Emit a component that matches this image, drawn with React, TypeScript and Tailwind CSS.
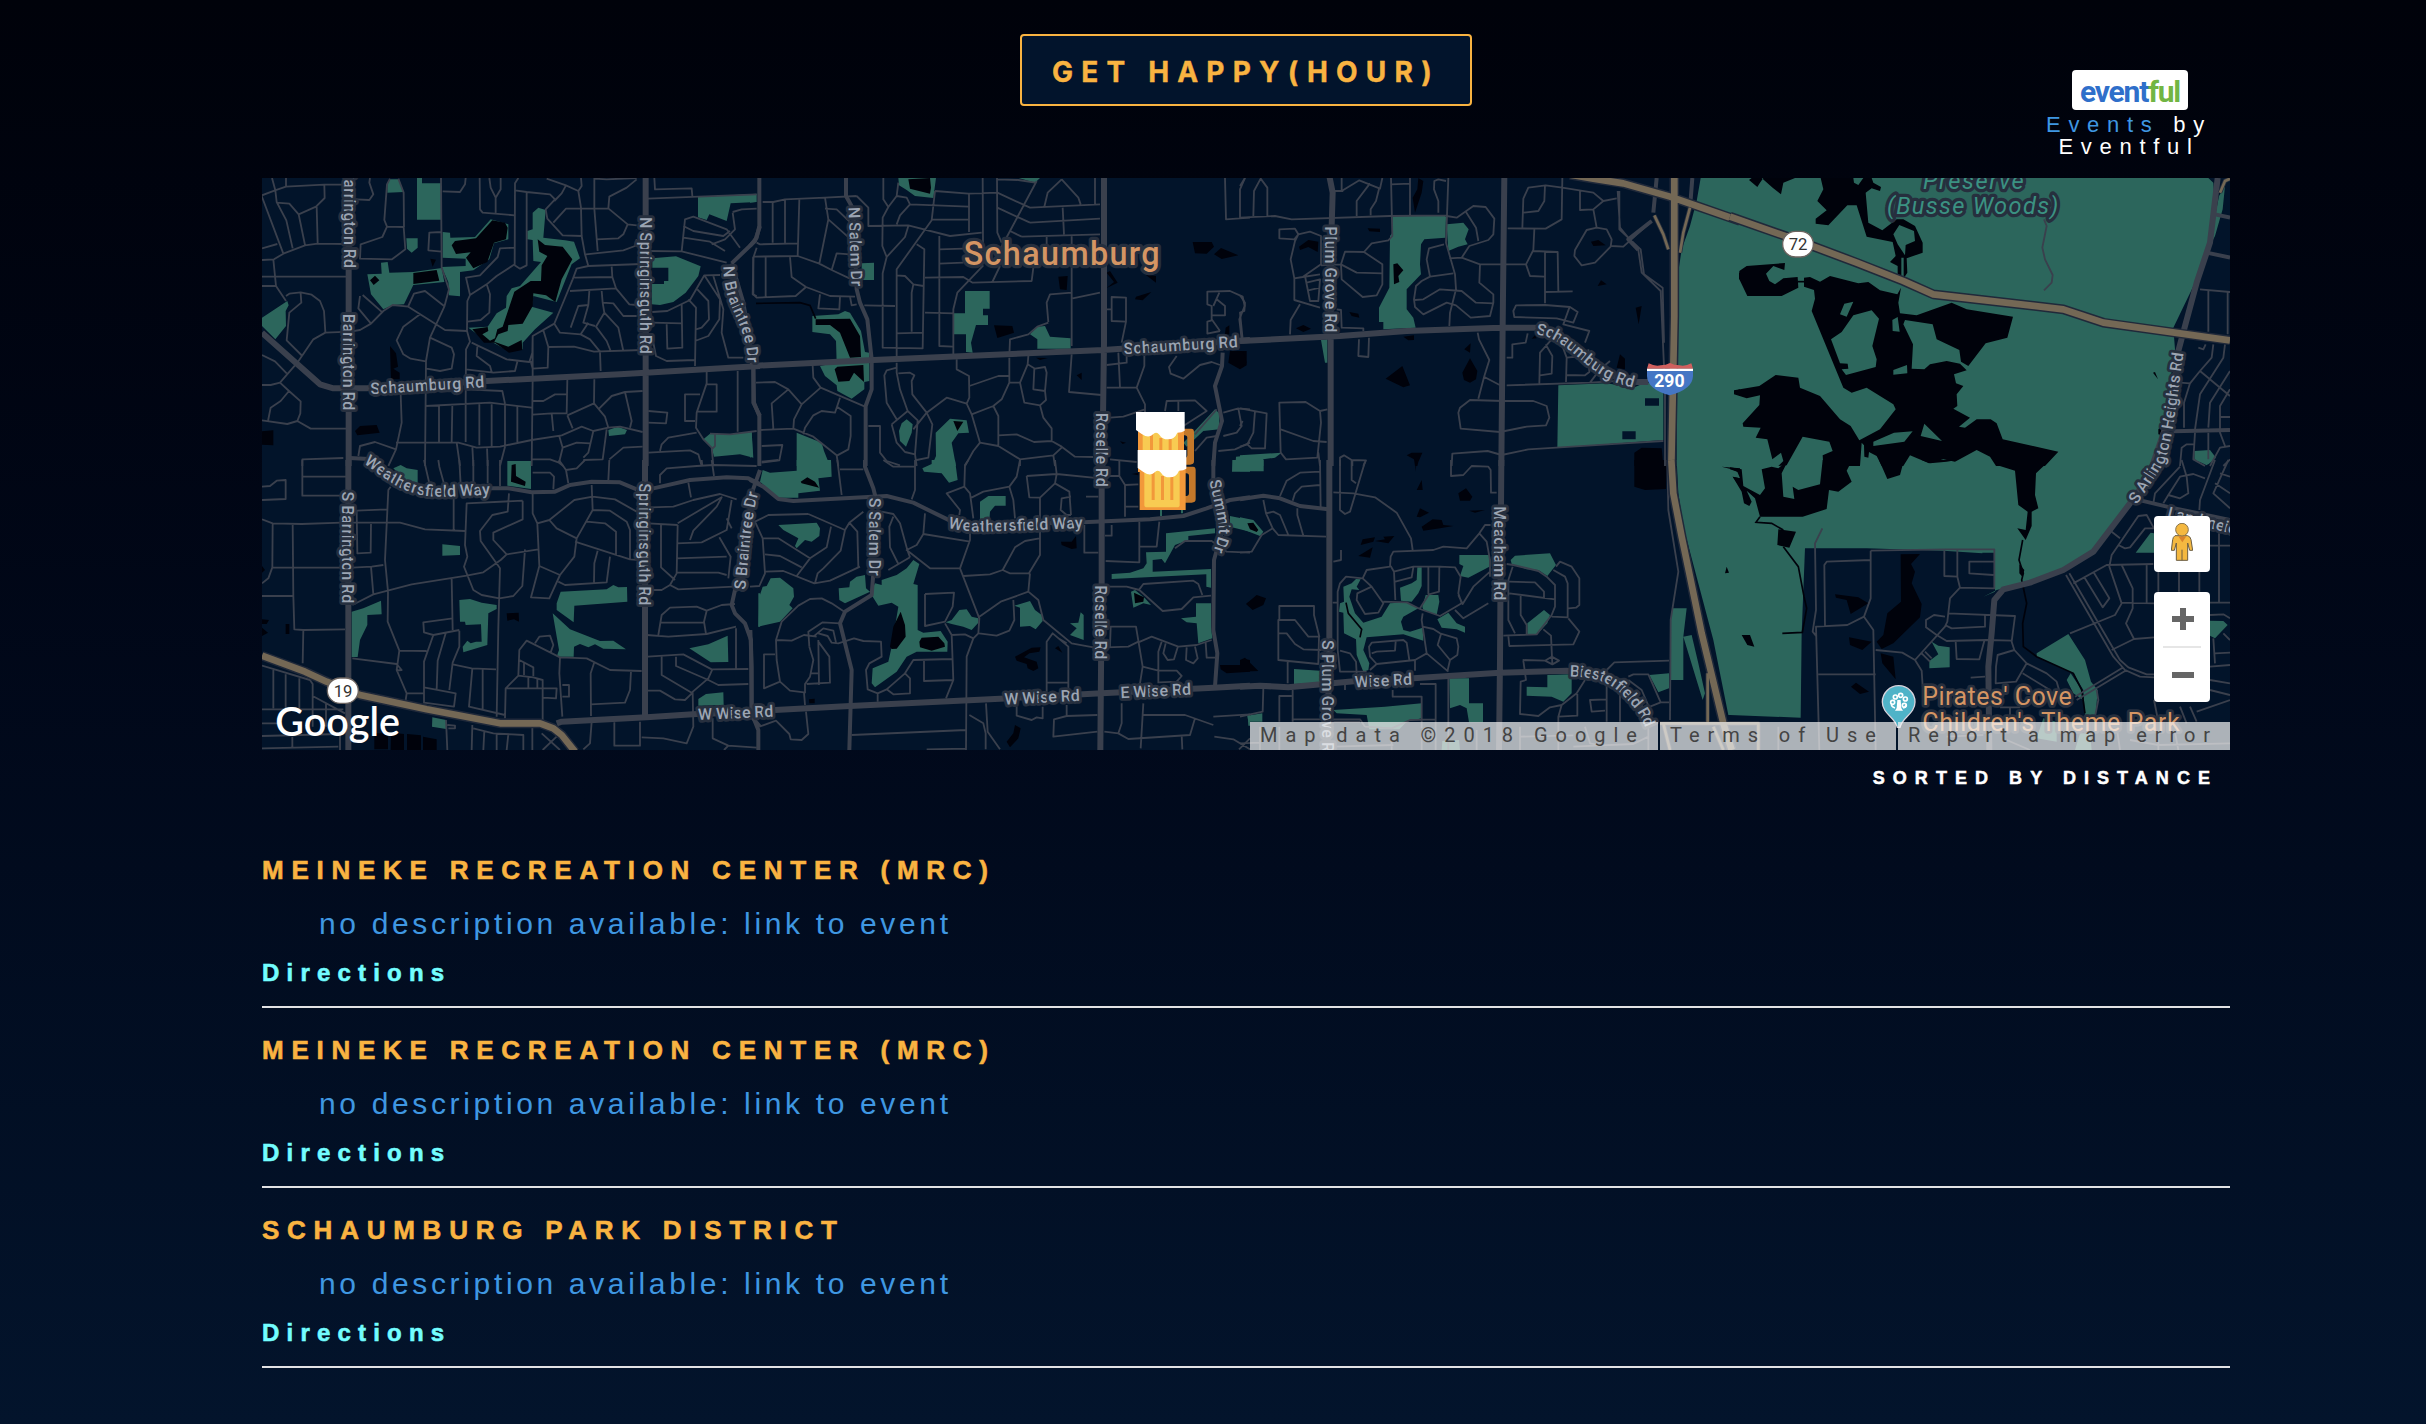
import React from 'react';

type Tile = {
  ox: number;
  oy: number;
  parks: string;
  water: string;
  streams?: string;
  roads: string;
  mid: string;
  main: string;
  highway?: string;
  ramp?: string;
};

const NAVY = '#02142a';
const PARK = '#2c665c';
const WATER = '#00020b';
const ROAD = '#3a404d';
const HALO = '#262f3e';
const TAN = '#746855';

const tiles: Tile[] = [
  {
    ox: 0,
    oy: 0,
    parks:
      'M6 425 82 375 86 388 77 405 78 450 46 490 6 450Z M382 25 390 10 417 10 431 48 382 50Z M471 6H486V22H543V131H471Z M439 187H473V215L455 230 441 218Z M322 295 365 293 363 260 383 258 388 290 460 288 545 276 553 318 460 327 432 385 398 387 370 400 333 355Z M548 168 570 170 571 185 645 183 692 130 745 145 745 190 702 202 688 250 640 283 600 288 600 361 567 358 565 318 545 273 617 270 617 248 548 245Z M835 95 857 102 850 185 915 193 942 197 960 247 935 265 890 378 820 360 815 392 880 410 825 460 788 500 788 520 745 525 700 500 680 495 625 455 683 452 710 412 738 395 740 360 755 337 780 330 843 258 820 255 818 192 802 190 802 165 818 160 818 110Z M1177 247 1248 241 1322 271 1315 300 1277 350 1240 378 1200 387 1175 385V324H1212V315H1225V275H1177Z M1314 63 1490 53 1490 78 1412 82 1400 135 1348 115 1340 132 1314 124Z M1045 762 1073 752 1101 762 1095 775 1047 780Z M1330 790 1350 773 1410 775 1475 767 1480 845 1440 835 1362 842 1355 815Z',
    water:
      'M575 208 585 195 648 187 697 133 735 140 743 155 738 190 702 200 682 258 640 277 618 245 632 229 588 234Z M833 190 855 207 908 212 937 250 905 310 886 378 858 358 820 352 818 390 788 443 745 447 743 465 715 475 703 497 745 512 785 492 787 522 747 530 705 500 672 500 637 460 683 453 685 465 667 475 690 494 705 487 712 460 728 452 763 347 812 315 843 315 845 268 862 240 838 227Z M511 248 528 251 518 272Z M460 291 530 282 538 314 460 324Z M330 313 345 299 358 313 341 327Z M390 510 408 532 414 572 400 578 419 590V610H393Z M285 765 300 750 350 747 359 770 292 778Z M6 766 40 763V808L6 806Z',
    roads:
      'M6 58 45 43 78 32 192 26 258 26 M78 32V6 M36 6 46 43 50 78 79 133 98 217 M50 80 88 83 116 115 135 207 M116 115 168 92 194 66 193 27 M170 92 173 203 M5 60 70 233 M6 217 52 204 M6 252 42 250 70 233 135 208 173 203 258 204 M40 250 48 330 78 375 M6 302 258 302 M6 330H48 M78 360 88 353 122 349 155 356 180 375 192 405 196 468 M122 352 124 380 88 410 80 493 127 540 M60 620 112 560 160 490 196 470 270 467 M6 537 45 556 80 592 M6 627 32 627 60 620 87 645 122 676 121 712 112 735 82 744 6 733 M24 735 32 695 62 675 87 645 M112 735 152 758 258 758 M330 6 328 20 340 55 328 72 290 70 M390 8 381 25 373 132 381 152 431 153 436 220 396 250 300 248 302 205 367 183 381 152 M415 8 431 50 432 153 M543 6 545 275 567 340 553 392 510 485 498 555 495 870 M548 46 600 48 615 25 617 6 M543 168 508 170 505 223 545 227 M659 6 660 100 668 110 764 118 M688 6 692 35 707 65 707 110 M722 6V40L707 65 M775 6 765 22 764 265 710 300 680 325 690 355 688 410 662 432 622 437 M765 43 800 48 870 55 885 70 857 100 862 128 908 178 965 180 M800 48V268L780 278 764 268 M763 215 720 217 713 243 660 298 618 305 630 357 622 375 621 465 630 497 618 520 617 680 M630 357 680 325 M860 8 918 28 955 45 963 95 965 180 975 235 985 270 950 278 938 310 905 390 883 443 818 480 817 530 808 558 740 550 635 500 M918 28 905 52 883 75 M963 6 965 30 955 45 M1003 6 1003 98 1013 225 M1130 10 1100 35 1048 62 1045 97 918 98 880 140 M1003 8 1040 10 1130 6 M1045 97 1103 145 1090 175 1075 187 1010 190 M1103 145 1130 148 M1130 190 1125 210 1090 223 978 235 M985 270 1145 264 M943 305 1057 303 1055 272 M930 345 1068 337 M1057 303 1068 337 1108 385 1130 387 M988 345 985 387 955 390 932 455 M985 387 970 440 1005 450 M883 443 900 470 962 475 985 440 M1025 345 1028 380 1060 382 1090 420 1130 420 M1028 380 1033 410 1008 452 1040 495 1052 525 M1033 410 1075 455 1090 525 M962 475 990 490 1020 527 M865 513 942 512 1002 527 1145 522 M850 463 865 513 863 575 818 578 812 555 M1020 527 1022 585 M480 415 430 452 410 493 430 535 452 548 497 556 M300 360 295 397 333 443 370 405 398 387 445 392 528 445 555 462 622 465 M308 357 368 410 M445 390 462 353 495 345 555 392 M333 443 300 462 270 467 M510 485 575 515 582 535 575 578 540 585 500 578 M652 512 650 540 690 570 695 588 M617 580 700 590 765 585 772 557 M617 640 727 645 735 683 M497 690 690 680 815 695 M537 690V798 M577 688 575 798 M617 680V798 M658 682V808 M695 685V812 M735 683V812 M772 690V798 M408 800 595 800 650 815 720 812 815 792 905 778 965 752 1000 765 1045 755 1080 752 1148 768 M590 800 600 870 M637 812 640 870 M681 812 683 870 M735 812 720 870 M818 480V610L815 870 M422 655 425 740 408 820 385 870 M408 820 345 798 300 810 295 840 M127 870V850L250 846 M922 610 920 712 875 712 818 716 M818 675 850 675 885 655 922 655 M875 712 880 765 M922 718 938 757 M922 718 1002 682 1003 610 M1002 682 1035 722 1045 755 M1018 697 1055 660 1095 648 1148 645 M1095 648 1115 735 1110 755 M897 778 908 815 897 860 910 870 M908 815 950 800 990 802 M1000 765 985 830 970 845 M1040 760 1028 850 970 852 M1148 812 1090 815 1048 850 M818 850 870 850 897 860 M1163 68 1490 55 M1183 6 1185 40 1295 37 1297 60 M1162 225 1265 226 1400 260 M1265 226 1275 130 1300 122 1400 160 1440 215 M1270 150 1300 165 1390 180 1410 165 M1270 185 1350 197 1395 225 M1418 110 1425 160 1395 190 1355 205 M1418 108 1445 100 1490 98 M1177 408 1222 405 1290 372 1333 298 1380 297 M1177 440 1265 442 M1265 385 1267 515 1222 518 1220 445 M1285 370 1308 395 1305 570 M1312 340 1345 375 1347 430 1325 455 1308 460 M1333 298 1380 370 1378 430 1345 480 1305 495 M1180 500 1188 540 1220 555 1305 552 M1360 300 1390 400 1385 470 1405 545 1450 545 M1490 215 1480 245 1478 355 1490 360 M1165 705 1222 710 1218 742 1165 740 M1320 655H1275V735H1305 M1340 585 1340 622 1310 710 1308 755 1330 790 1355 815 1360 870 M1340 625H1370V707H1310 M1433 585V767 M1165 830 1290 823 1315 835 1325 870 M1200 825 1205 805 1225 785 1310 770 M1490 765 1410 775 1350 773 M1365 775V810L1355 820',
    mid: 'M1500 150 1485 195 1415 262 M1415 262 1450 380 1480 570V680L1500 720 M270 846 340 850',
    main: 'M266 0V870 M6 470 180 625 220 637 320 637 680 615 1080 595 1500 570 M1157 6V870',
  },
  {
    ox: 0,
    oy: 852,
    parks:
      'M400 25 422 15 440 25 473 30V78L445 80 425 50Z M742 3H813V87L742 77Z M547 253 600 258V285L547 287Z M275 455 310 445 363 422 365 463 322 465V495L300 540 293 591H275Z M598 420 630 417 665 428 710 435V447L685 460 682 555 610 577 608 560 622 542 632 550 648 545 665 545 663 493 617 495 615 485 600 485Z M890 430 902 395 1040 388 1060 375 1075 382 1101 381 1102 425 943 437 941 487 890 450Z M878 460 930 508 1020 543 1060 542 1098 568 1030 566 1005 553 985 562 960 552 942 560 941 590 890 590 897 570Z M1288 565 1345 553 1403 527 1405 606 1352 607Z M1315 717 1338 702 1390 697 1391 735 1315 737Z M517 772 558 780V807L516 800Z M1495 400h5v100h-5z',
    water:
      'M755 15 767 12 768 48 797 65 795 78 753 65Z M740 460 776 458 777 485 762 478 742 482Z M343 820H384V868H343Z M393 818 432 822V870H392Z M441 822 483 826V870H441Z M489 830 530 838V870H489Z M77 492H88V522H77Z M6 478 27 480 20 492 6 492Z M6 503 24 518 6 528Z M6 318 15 330 6 338Z',
    roads:
      'M127 0V107L258 107 M127 50H258 M6 80 30 78 50 62 77 60V117L6 120 M6 178 38 190 125 192 245 188 420 188 495 208 615 213 M38 190 37 322 25 355 6 370 M98 192 100 408 103 508 130 510 255 508 M37 322 245 323 M6 408H100 M130 510 128 610 M392 80 385 90 375 300 384 395 383 485 418 572 410 630 440 700 437 720 M380 148 290 152 292 280 332 278 333 192 M277 323 335 320 370 315 M333 320 340 403 M277 435 340 403 455 373 620 347 670 337 722 300 740 283 835 268 M581 117V210 M788 122 620 130 615 255 622 290 612 320 640 390 665 405 718 415 760 408 787 378 795 268 M788 122V178L700 218V240L740 283 M747 100 743 155 697 165 660 213 662 243 720 325 715 500 710 770 M818 100 818 160 832 190 838 318 813 412 868 415 900 345 943 290 950 235 998 150 995 75 M838 318 900 345 M832 190 868 180 943 120 998 110 1065 118 1130 155 M868 180 890 205 950 235 M998 150 1050 152 1100 185 1110 210 1110 298 M980 185 1035 190 1068 215V285 M945 245 1110 298 1140 300 M1013 272 1003 310 1002 367 M1050 290 1040 367 915 375 895 365 M575 357 578 510 M578 475 490 487 492 517 520 525 598 510 M520 525 492 605 492 728 582 740 587 700 492 682 M557 520 533 602 530 688 M598 512V560L578 608 568 690 M578 613 635 625 708 628 M637 625 627 740 735 765 M668 628V752 M418 572 500 573 M277 595 410 612 425 630 408 632 M440 700 492 700 M735 775 737 685 775 647 778 570 800 542 900 592 980 595 1050 630 1145 633 M825 550 838 530 870 527 880 555 872 577 M900 592 898 640 907 770 M778 600 820 622V648 M792 610V645 M775 647 820 652 848 660 848 780 M737 685 890 685 888 715 850 713 M805 652V683 M832 656V683 M907 675H927V710H907 M1003 607 992 640 993 768 M1113 633 1110 690 1095 728 993 733 M1160 525 1225 530 1340 522 1428 500 M1195 525 1205 465 1230 443 1310 440 1340 452 1385 435 1425 432 M1200 488 1330 488 M1340 452 1332 485 1338 522 M1165 190 1253 195 M1175 142 1240 140 1300 120 1380 102 1430 118 M1253 195 1250 340 1230 375 1205 390 1165 390 M1203 195V322L1245 360 M1253 190 1320 150 1385 112 1370 140 1300 212 1290 240 M1250 250 1325 247 1400 210 1415 120 M1250 295 1400 290 M1250 338 1375 338 1400 345 M1378 232 1412 290 1405 355 M1230 375 1255 388 1420 380 M1400 175 1415 205 M1285 68 1293 112 M1200 70 1200 45 1220 25 1310 18 1360 15 1490 18 M1325 0 1327 18 M1355 0 1362 48 M818 38 870 38 882 50 880 88 M897 0 918 30 925 70 M918 30 950 25 975 0 M1048 0 1045 60 M1163 590 1270 583 1355 628 1465 627 M1205 590V645L1295 698 1345 655 1357 628 M1248 590V618L1345 660 1375 675 1465 672 M1428 505V625 M1163 692 1200 692 1245 718 1275 720 1298 698 1300 800 1280 850 1210 835 1145 832 M492 0 508 70 M535 0 538 20 553 75 M598 0 602 75 M640 0V70 M683 0V70 M720 0V78 M1063 787V857H1140V785 M1358 775V835L1405 857 1490 863 M1405 857 1392 870 M6 617 150 660 158 672V800 M40 630V745 M77 643V748 M118 655V750 M6 748 250 748 M158 708 255 760 M198 730V800 M6 828 240 822V870 M6 865 235 860 M97 825V865 M6 790H60 M637 795 635 870 M640 805 700 820 790 825V870 M673 812 670 870 M710 818V870 M745 822 740 870 M817 780V870 M845 820 900 870 M900 820 848 870 M558 780 562 870 M562 795 585 797V805H565 M995 785 990 850 970 868',
    mid: 'M690 85 745 85 815 97 885 95 930 75 995 65 1080 67 1130 88 M1180 85 1290 60 1400 52 1465 55 1500 72 M1500 30 1475 100 1440 385 1425 390 1415 435 1425 460 1455 490 1473 540 1475 770 1500 800',
    main: 'M265 0V880 M890 790 905 785 1160 772 1310 762 1500 756 M1155 0V770',
    highway: 'M6 587 135 635 200 665 300 705 500 748 720 790 840 790 880 805 905 825 945 875',
  },
  {
    ox: 1470,
    oy: 0,
    parks:
      'M0 57 18 54V78L0 80Z M445 6H558L550 66 495 60 470 42 447 28Z M806 6 870 6 855 20Z M335 262 372 260V312H335Z M187 420 265 415 285 405 300 410 333 465 345 528 358 530V615L343 618V640L305 668 262 645 260 628 225 600 210 570 260 560 258 495 240 475 187 468Z M645 345H719V398H699V418H714V447H678L663 500 668 530 648 528V475H612V412H645Z M840 475 862 452 885 450 900 482 962 487V518L862 518V490Z M447 765 455 742 470 730 488 745 485 770 468 812 450 795Z M545 870 558 840 557 770 600 728 650 733 657 770 625 772 605 800 618 870Z M140 770 215 800 222 825 240 870H140Z M0 770 5 768 8 840 0 845Z M1300 800 1325 775 1395 700 1408 712 1408 760 1360 765 1310 812Z M1458 842 1500 838V870H1456Z',
    water:
      'M475 10 540 6 543 35 540 53 480 38Z M197 430 300 428 330 480 333 543 300 545 270 470 240 447 197 447Z M254 580 262 572 340 567 342 618 312 590 298 615 265 617Z M610 735 640 737 622 765Z M1328 198 1385 198 1392 212 1370 233 1335 232Z M1392 235 1413 216 1465 238 1415 249Z M1187 296 1218 300V320Z M1155 370 1158 362 1204 348 1178 373Z M925 302 953 300 950 342 930 340Z M1070 290 1080 285 1103 320 1070 336 1092 318Z M732 448 787 450 792 470 742 486Z M980 598 995 590V612Z M858 545 893 546 870 552Z M1427 455 1438 448V475H1425Z M1440 525 1490 525 1490 568 1470 580 1435 560Z M1110 796 1128 800 1118 804Z',
    streams: 'M18 382 150 380 180 388 197 428',
    roads:
      'M38 78 70 78 105 70 225 65 320 60 M68 78V200 M105 72V200 M148 70 143 240 M20 200 30 205 143 202 M10 242 143 240 208 263 245 282 300 308 M225 65 235 130 208 263 M225 98 260 100 300 138 M235 130 300 188 M300 235 260 232 245 282 M120 243 125 303 168 333 M10 242 10 355 20 365 137 360 168 333 240 360 315 362 M47 243V362 M210 355 205 397 268 400 270 363 M300 362 305 388 320 385 M320 60 355 95V150L475 148 600 180 695 170 M343 388 435 390 M400 6V70L415 93 398 125 397 210 410 243 398 292V515L518 517 523 220 500 205 M445 20 440 60 415 93 M440 60 470 65 480 85 655 92 M480 85 450 118 440 145 M475 150 465 183 410 243 M440 545V280L545 133 555 45 M545 131H657 M657 55V168 M555 45 655 53 742 50 840 95 1050 85 M698 6 699 200 M741 6 742 170 755 200 M742 95 840 140 M742 10 805 12 855 20 M860 15 780 165 815 182 M815 182 1050 175 M840 140 1050 128 M938 95 942 175 M780 165 740 240 M935 10 893 50 883 92 M935 10 985 65 992 85 M1035 6V85 M568 180V510L608 512 M568 220 640 218 M568 263 640 260 M525 305 640 303 668 320 845 315 850 275 M750 270 727 318 M525 410 612 412 M438 298 465 300 490 325 520 330 M490 325 485 350V467 M438 472 520 470 M610 535V400L622 350 700 268 M895 438 890 380 900 355 965 350 M965 180V510 M890 182V215 M968 367 1050 350 M778 540 780 490 835 475 862 452 895 440 M1070 400H1085 M1085 363 1128 365 1128 437 1085 435Z M1128 437 1115 500 M1410 465 1372 473V437L1385 433V390L1372 385V347L1440 345 1478 362 1484 390 1468 430 1475 490 M1385 430 1410 465 M1408 350 1390 390 M1400 370 1425 390V418H1385 M1425 6 1428 130 1500 125 M1485 6 1470 40V125 M1105 530 1110 635 M1070 567 1130 560V535 M1070 635 1160 635 1185 685V710 M1160 635 1183 570 1183 540 M1280 540 1257 573 1262 593 1300 608 1350 567 1385 558 1410 567 M965 535 957 648 1055 657 M778 545 778 620 755 670 730 690 665 715 M778 620 810 620 823 680 870 688 M778 600 745 600 658 630 M835 540 833 565 810 620 M833 565 855 578 885 573 890 590 885 645 850 640 853 578 M885 645 888 672 870 688 880 725 905 757V795 M620 550V580L657 600 658 665 650 683 665 715 690 800 745 810 810 850 910 838 935 815 M650 683 590 665 530 710 490 760 M730 690 745 720V812 M745 778 800 775 852 798 905 795 935 812 975 842 1030 843 M910 838 915 870 M810 850V870 M690 800 670 825 645 870 M440 560V590L450 640 473 705 425 745 M440 575 410 583 403 598 410 680 440 730 M445 592 480 590 493 598 485 615 487 655 530 710 547 745 535 845 500 852 M473 705 503 733 495 835 500 870 M425 745 440 800 465 828 495 835 M355 750 390 750V830L410 855 450 868 M188 570 190 605 212 635 345 692 M212 635 155 685 132 730 130 758 28 762 M18 620 75 618 115 640 155 685 M115 640 65 682 70 758 M270 665 255 710 215 705 190 718 165 755 160 775 M262 693 302 720V780L295 820 262 838 M130 758 190 782 260 838 265 870 M35 810 97 807 88 853 35 860 M1080 725 1120 722 1185 700 M1245 705 1250 675 1335 673 1370 705 1300 750 M1285 675V705 M1335 775 1370 735 1400 700 M1420 710 1465 697 1475 750 1460 770 1420 780 M1335 825 1370 785 1400 780 M1405 825 1455 820 1500 800 M1465 697 1500 700 M1080 850 1160 858',
    mid: 'M28 6 28 150 20 185 0 210 M10 570 12 680 28 720 28 870 M288 6V60L310 100 320 340 330 380 352 430 365 550 365 640 347 690 347 870 M1418 530 1416 570 1395 630 1416 735 1395 800 1390 870',
    main: 'M1062 0V500L1057 870 M0 570 370 552 1060 522 1500 492',
  },
  {
    ox: 1470,
    oy: 852,
    parks:
      'M140 0 243 0 245 50 205 55 210 92 145 100V113H85L30 65 38 30 60 38 140 32Z M545 0 615 0 623 60 597 68 575 40 522 35 517 25 545 12Z M690 125 715 108 767 108V137L735 137 720 155 718 180H690Z M85 195 200 188 210 205 208 228 185 245 165 240 140 265 135 258 145 235 100 210Z M266 385 298 382 300 365 320 350 345 345 348 385 360 395 285 430 268 420Z M368 410 368 385 375 370 395 375 395 360 440 345 470 325 490 300 508 312 490 372 503 375 503 510 520 518 572 513 593 545 592 575 500 575 470 590 440 635 375 682 365 670 368 625 415 605 425 560 445 440 425 428 385 437Z M25 500 28 410 38 380 50 378 62 355 90 353 130 385 132 410 118 435 128 445 90 485Z M587 487 605 480 628 450 650 448 665 470 685 475V488L665 510 640 500 605 492Z M793 437 840 423 855 450 875 465 878 483 857 508 840 498 810 500 810 443Z M992 457 1001 465V540L960 525 980 505 960 490 985 488Z M1085 342 1140 338 1180 325 1190 310 1188 277 1248 275V220L1395 205V220L1315 228V240L1275 255 1245 310 1235 297 1208 300V335L1383 327V383L1369 380V343L1085 357Z M1143 395 1155 390 1185 415 1203 435 1180 430 1150 443Z M1293 475 1338 470V430H1383V500L1387 535 1345 550 1340 490 1310 487Z M1447 0H1500V35H1446Z M1440 168 1500 180V215L1440 200Z M1493 765H1500V797H1495Z M1230 150h6v18h-6z M1293 150h6v10h-6z',
    water:
      'M152 65 172 52 195 65 207 83 155 70Z M420 560 430 500 452 455 465 495 467 530 440 566 425 567Z M508 545 515 533 565 530 583 550 585 560 545 572 510 562Z M1152 398 1182 412 1180 425 1155 430Z M933 245 965 245 978 228 980 265 965 267 935 255Z M795 590 845 563 872 562 868 575 838 580 822 592 860 605 865 625 850 633 833 625 830 612 800 602Z M770 845 790 820 795 795 812 805 805 835 780 862Z M177 718 194 716V730H178Z M915 565 925 558 937 578Z M1410 615 1470 615 1485 597 1500 600V635L1430 640 1412 628Z M1490 430 1500 425V440Z M1145 42 1165 38V46Z',
    roads:
      'M35 5 85 0 M262 0 275 105 M270 28 340 28 M495 0 495 90 485 118 M400 0 430 20 495 20 M655 0 645 15 643 80 660 100 670 175 M643 80 590 100 630 150 628 165 M660 115 700 95 778 80 790 120 795 175 M810 0 800 50 778 80 M830 48 920 42 1050 55 M830 48 838 112 870 113 915 70 920 42 915 0 M915 70 958 95 963 165 M963 110 935 115 932 150 950 165 963 165 M870 113V285L835 343 M1008 110H1045 M1085 195V227H1065 M1003 195V278H1045 M1108 0V48H1070 M1108 48 1125 75 1125 170 M1125 75 1165 73 M1125 140H1165 M1168 185V307L1067 303 M1228 185 1220 260H1168 M525 160 520 222 500 255 470 270 540 325 630 325 660 240 660 220 M520 222 660 245 M868 235 825 243 795 262 758 330 780 340 840 340 M758 330 720 343 640 348 M630 325 688 475 685 520 670 535 650 590 648 870 M840 340 835 395 752 425 688 470 M835 395 865 420 880 480 965 550 1030 562 M790 420 793 480 778 512 740 527 687 520 M525 402 612 398 608 440 585 485 525 498V402 M585 490 605 525 645 523 670 535 M605 525 610 660 588 715 M610 660 522 663V600 M605 597 490 600 465 640 480 655 480 700 430 703 410 688 465 640 M410 688 383 700 M383 725V700L353 688 348 630 358 610 395 590 393 545 340 543 312 535 265 550 245 548 233 528 205 520 M38 235 85 235 180 295 M175 162 55 165 15 185 38 235 45 340 28 378 0 380 M175 162 285 210 M45 283 90 288 155 322 M45 335 100 333 193 370 240 362 330 320 M415 330 480 292 M180 295 140 348 M243 200 230 262 180 295 M285 210 272 272 220 325 203 340 195 370 M285 210 298 188 340 155 M298 188 322 215 325 320 M395 155 430 162 450 190 472 270 480 292 M430 170 418 200 420 262 445 312 M283 455 245 430 215 415 180 417 145 437 95 485 78 540 80 600 90 665 120 692 162 697 165 735 M80 540 125 542 162 525 200 530 M178 560 175 515 218 487 270 490 M178 560 190 600 180 650 165 672V700 M190 530 220 505 250 512 258 548 M205 540 207 675 M205 545 238 590 240 668 170 672 M75 583H42V685L90 665 M180 640H205 M28 800 78 782 118 822 122 838 155 840 175 822 168 755 M305 825 648 810 M530 868 648 866 M708 730 713 815 750 868 M658 765 700 790 707 820V868 M800 740V767L845 780 860 772 878 775V740 M890 695V545L908 520 955 560V690 M890 668H955 M925 535 950 550 M950 735V765 M1042 765 950 768 912 778 910 830 1042 815 M1063 815 1105 820 1135 837 1320 825 1335 775 M1115 730V790L1105 820 M1180 730 1172 865 M1178 765 1305 765 1390 795 M1390 770 1500 763 M1393 830 1450 838 1500 868 M1467 868 1500 835 M1295 825 1297 868 M1067 380 1130 380 1168 390 1238 453 1295 447 1330 412 1383 407 M1168 388 1180 372 1330 362 1345 372 1357 405 M1070 562 1135 560 1165 545 M1080 560 1082 500 1158 500 1178 620 1170 670 M1165 547 1205 530 1285 560 1340 555 1385 540 M1235 545 1225 575V670 M1178 620 1225 632 1280 632 1295 648 1280 665 1228 667 M1247 550 1240 580 1253 600 1272 598 1283 562 M1310 562 1308 600 1330 610 1343 595 1335 560 M1367 548 1370 593H1395 M1275 265 1305 243 1385 243 1430 275 1500 278',
    mid: 'M345 0V20L370 85 375 105 M0 60 40 80 85 117 130 123 410 108 490 128 600 182 650 195 1000 187 1200 178 1300 168 1370 145 1440 120 1500 112 M370 340 365 405 285 455 270 490 285 550 305 630 298 870 M1390 0V60L1420 200 1392 300 1390 510 1402 580 1395 680 M1 510 5 620 5 760 25 810 25 870',
    main: 'M1055 0V400L1051 870 M75 750 300 738 750 716 1055 700 1390 683 1500 677',
  },
  {
    ox: 2940,
    oy: 0,
    parks:
      'M457 121 610 117 618 122 616 185 553 190 543 205 540 265 543 295 500 340V400L520 425 527 455 430 460V438H417V395L448 335 450 180 457 170Z M620 145 670 140 686 160 675 190 683 205 655 212 625 225Z M243 492 262 490V560L255 560Z M955 628 1100 622 1180 635 1215 620 1270 625V792L952 815Z M1215 667V689H1257V667Z M1147 766V790H1187V766Z M0 838 125 830 105 845 70 850V870H0Z M1382 6H1500V870H1310V320L1325 220 1350 150 1370 75Z',
    water:
      'M177 212 205 192 235 197 233 228 205 213 180 222Z M383 157 420 158V168L388 166Z M535 6 550 15 545 50 525 110 518 65 532 40Z M460 265 472 262 490 283 475 300 478 318 462 325Z M328 408 355 413 358 425 335 420Z M168 457 190 447 213 458 190 468Z M490 482 522 478V492L505 493Z M437 608 487 570 510 628 490 634 465 622Z M673 520 692 502 690 530Z M667 590 690 547 712 585 708 610 690 620 672 612Z M1053 197 1075 192 1097 208 1060 210Z M1073 330 1083 313 1100 325Z M1187 395 1205 390 1196 445Z M1130 575 1140 535 1155 548V580Z M500 838 515 830 547 830 535 858 532 870H525L522 850Z M1183 830 1205 815 1265 817 1270 870H1183Z M0 525 10 530 20 560 0 575Z M1483 645 1500 640V660Z M1497 290h3v20h-3z M875 488 885 478 890 487Z',
    roads:
      'M0 125 105 120 155 130 450 120 620 118 M15 6 0 30 M40 120 42 45 62 8 82 35V120 M118 160 165 158 175 175 163 190 118 187Z M175 175 210 167 243 180V265L188 303 163 307 152 250 165 195 175 175 M163 307V372L240 395 M180 385 152 432 150 475 M188 303 240 295 M195 300 210 375 235 375 240 310 200 320 M205 343 240 335 M243 268 303 265 M303 265 315 227 372 228 427 265V325L410 358 368 363 305 310Z M303 265 350 290 427 292 M372 228 395 202 445 193 457 180 453 6 M510 6V118 M453 25 510 23 M618 15 595 10 583 15 582 40 595 75 595 110 M285 45H310 M305 6V45L358 13 420 38 427 6 M390 22 350 75V120 M418 35 408 75 392 100V118 M290 400 303 402 305 455 370 457V465 M357 490 355 540 385 543 387 485 M620 120 650 125 700 90 737 93 763 128 760 175 745 192 688 210 665 245 628 247 M678 108 708 155 715 195 M665 245 720 265H858 M720 265 718 320 760 355V380L750 420 692 425 648 388 620 380 550 415 525 393 522 370 528 330 545 315 570 302 640 292 M570 302 560 250 567 217 612 205 M625 6 618 200 645 295 648 340 630 410 628 450 M525 372 550 370 600 340 665 345 708 380 760 382 M803 157 917 158 965 130 967 6 M847 157 850 68 865 35 917 28 967 35 1060 50 1090 75 1130 67 M915 28 913 75 895 105 850 110 M1020 42V102L1060 100 1090 75 M1060 100 1070 155 M1040 162 1070 155 1100 160 1115 190 1112 212 1065 260 1025 268 1003 240 1005 222Z M1115 210 1150 212 1235 135 M1133 45 1140 155 1195 222 1205 290 1262 345 1275 640 1275 870 M1138 45V160L1202 220 1212 295 1268 335 1272 500 M883 160 880 222 858 265 870 300 913 302 M880 225 953 228 955 347 M915 228V382 M915 348 998 346 M828 388 915 387 990 393 1013 408 1000 440 950 427 823 423 820 405Z M988 395 970 445 1048 465 1035 500 M713 470 717 490 748 552 733 600 715 668 M733 603 785 630 M800 545H817V505L857 500 863 472 M980 545 960 490 935 490 900 530 898 622 M917 505 937 540 935 593 900 598 M980 545 978 618 M978 597 1035 598 1048 588 1045 520 M980 545 1030 540 M1050 620 1080 580 1110 555 M800 628 1050 620 1180 612 M790 675 690 672 660 695 655 710 662 758 780 768 860 752 918 748 928 725 920 690 880 675Z M635 870 637 833 743 825 785 837 865 820 1140 803 1270 795 M0 358 15 380 13 405 0 410 8 490 M240 705 197 678 118 680 122 830 138 850 232 845 243 740 240 705 262 700 M122 760 220 795 260 798 M235 830 240 870 M0 697 80 712 75 817 35 817 22 805 0 812 M45 705 40 770 22 805 M0 750 8 735 M300 870V845L312 838 335 852 378 853 370 870 M337 853V870',
    mid: 'M1250 6 1240 110 M1357 6 1352 70 M1235 135 1165 190 1195 222',
    main: 'M268 0 278 50 272 250V870 M0 495 300 480 500 465 780 455 900 455 960 480 1130 605 1190 618 1225 618 M793 0 788 450 784 870',
    highway: 'M1303 0V420L1294 870 M990 -4 1060 8 1150 22 1290 62 1500 135',
    ramp: 'M1243 118 1270 175 1285 220 M1350 95 1330 170 1320 230',
  },
  {
    ox: 2940,
    oy: 852,
    parks:
      'M0 0H71V34H0Z M0 172 40 180 70 215 60 228 0 205Z M658 285H748V320L685 353 660 348 670 318 658 312Z M812 300 825 287 930 280 948 315 922 348 895 330 860 328 815 312Z M310 380 335 370 348 357 362 358 350 380 358 390 335 388 328 410 345 460 370 488 425 470 450 430 500 427 535 445 490 470 483 485 490 510 510 515 548 503 550 542 490 523 380 532 370 570 388 610 385 630 370 635 350 585 348 538 312 520 310 458 297 455 300 430 312 425Z M480 383 515 370 530 360 532 322 545 322 545 378 535 400 515 425 483 422Z M547 440 557 405 595 405 598 425 590 465 550 450Z M592 478 625 458 650 490 675 500V518L650 508 605 503Z M862 490 912 450 930 465 922 490 890 524H862Z M162 627 240 632V668L162 672Z M922 645 995 643V700L970 725 935 710 860 707V680L922 682Z M1228 645 1287 640V685L1255 697Z M1297 445H1340L1330 530V660L1292 660V480Z M1330 530 1355 525 1375 610 1395 700 1388 720Z M628 655H687V730H729V787H687L680 745 660 735 630 745Z M280 750 435 740 545 730V775L500 785 478 808H388L380 765 290 760Z M607 843 657 840 660 870H605Z M22 767 67 760V785H25Z M1310 0H1500V765L1465 765 1420 540 1330 200 1315 100Z',
    water:
      'M1183 0H1280L1278 87 1215 90 1183 80Z M22 190 40 188 55 210 50 216 30 208Z M18 432 50 405 78 415 70 435 38 450Z M0 600 15 593 55 633 0 635Z M525 0H530L527 35Z M530 90 545 60 548 90Z M530 170 540 145 567 158 540 172Z M655 100 678 85 697 110 690 122 660 122Z M545 200 578 178 605 180 610 195 640 198 600 205 550 212Z M688 152 735 150 705 158Z M362 255 368 238 405 232 400 245Z M355 288 398 262 390 293Z M405 243 435 238 430 230 463 228 445 250Z M1455 340 1460 320 1467 338Z M1445 20 1500 25V38L1475 28Z M1478 50 1500 55V80Z',
    streams: 'M318 428 325 460 365 508 360 532',
    roads:
      'M240 0 242 145 M240 35 180 38 140 62 120 108 M240 75 185 80 165 100 158 122 M70 120 78 160 98 205 115 225 258 230 M78 160 100 155 120 165 145 225 M172 145V165L190 227 M98 205 65 225 35 275 0 278 M300 0V150L315 162 330 155 375 5 M335 0V60L348 70 M280 97 340 100 405 112 470 158 513 235 518 270 M303 270V300L280 305 M633 0V48L670 45 695 18 745 20 752 30 753 98H770 M450 320 452 290 460 275 580 270 610 260 680 265 718 220 735 195H752 M718 220 740 245 750 300V350 M450 320 380 330 368 355 318 350 300 370 293 395V570L300 635 380 635 M278 428H293 M368 355 395 380 352 400 350 420 375 462 415 458 430 430 395 380 M430 425 500 427 540 447 600 468 665 430 655 400 662 350 645 322 600 320 520 320 462 335 452 318 M462 335 466 420 M520 322 515 352 466 365 M565 320V402 M598 322 597 395 567 403 540 445 M655 405 668 432 700 380 750 335 M645 450 670 475 745 430 M548 460 545 480 560 580 625 635 M548 500 580 507 600 520 650 535 655 560 652 585 630 600 593 555 603 522 M630 600 622 635 M508 600 500 548 490 540 395 548 387 560 390 590 410 612 525 600 560 580 M395 580 410 575 465 572 467 545 M525 600V632 M390 630 410 612 M118 480V438H222V465L238 530H205L165 480H115V600L235 612 237 530 M115 520 140 520 165 552 190 568 245 570 M143 603V670 M70 685 68 755 0 770 M158 690V785 M155 708H118V785 M155 778 360 778 375 800 M275 785H360 M375 800 455 805 510 780 585 778 M458 690V710H545V805 M540 672H587V870 M625 655V870 M315 670V690 M300 572 330 580 348 605 350 640 M818 320 805 360V480L825 520 M808 365 885 367 912 395V415 M808 400 945 418 M842 403V465L860 495V522 M790 527 890 523 935 465 945 440V375L920 350 895 333 820 315 800 312 M948 320 960 305 995 320 1018 355V435L1008 443 985 445 M940 330 975 350 983 370V472L935 470 M805 528 808 558 1000 553 1018 515 985 475 M910 508 933 527 937 613 M848 600 915 602 935 590 957 602 937 613 915 602 M850 602 858 660 842 665 840 762 895 768 930 742 965 735 1010 700 1035 660 M955 770 1012 767V702 M965 735 955 770V870 M1100 630 1123 607 1287 602 M1100 660V785 M1100 718 1050 720 1055 755 1095 752 M1165 650 1180 643 1225 643 1262 727 1230 740 M1287 727 1262 727 M1165 660 1205 690 1235 760 M1140 690V785 M1290 780 1292 480 1315 335 1285 150 1282 0 M455 825V870 M545 830V870 M840 800V870 M1035 800 1050 850 1100 860 M1225 800V870 M60 800V870 M118 800V870 M280 860 460 855 M710 810V870 M840 830 1000 826 M1000 860 1180 852 1225 830 M0 850 60 848',
    mid: 'M0 118 70 107 120 115 180 138 265 148',
    main: 'M268 0V560L262 870 M784 0 780 600 777 870 M0 680 60 677 145 682 350 663 520 655 780 638 980 632 1080 645 1160 690 1240 790',
    highway: 'M1294 0 1300 100 1325 230 1350 350 1385 520 1450 790 1475 870',
    ramp: 'M1403 640V790 M1260 790H1500 M1270 790 1290 870 M1420 800 1450 870',
  },
  {
    ox: 4410,
    oy: 0,
    parks:
      'M0 6H1435L1450 20 1455 100 1435 220 1395 320 1330 455 1335 520 1300 750 1270 870H0Z M1485 30 1478 100 1455 180 1437 215 1467 60Z M1393 825 1440 822 1458 845 1430 868 1393 850Z',
    water:
      'M57 12 65 6H100L90 20 82 33Z M95 6H195L160 20 153 55 128 35Z M272 6H370L372 20 385 27 400 6 425 6 430 20 453 33 450 45 425 37 407 50 415 140 457 163 500 130 520 130 555 150 578 200V230L530 247 532 290 520 308 503 300V270L480 258 497 240 488 198 410 182 380 88H352L295 148 257 143V128L290 103 262 75 280 40Z M490 175 508 147 552 165 555 195 527 207 525 238 503 205Z M514 245h7v56h-7z M28 285 50 270 165 261 163 282 130 270 108 293 118 315 135 325 160 307 203 303 205 335 155 360 52 360 28 310Z M222 305 240 303 270 317 300 300 385 322 415 318 450 343 502 355 513 335 505 380 510 412 560 418 665 380 710 400 849 422 832 485 767 502 715 570 693 557 688 522 620 490 608 445 525 432 520 445 549 505 545 578 583 580 600 565 650 555 690 563 710 583 672 595 678 622 700 630 680 655 682 690 670 698 720 725 687 752 705 755 740 730 782 730 800 742 818 790 985 827 945 870 798 870 780 842 740 822 675 857 640 850 597 862 540 838 520 870 455 870 440 840 417 828 415 845 403 842 402 808 395 800 390 870 280 870 278 838 308 825 298 797 218 782 170 868 145 870 160 855 153 830 127 850 112 790 77 785 92 755 40 752 38 742 88 687 90 658 50 667 12 655V643L88 630 137 597 205 605 210 635 270 660 330 730 362 750 388 793 450 760 497 700 490 685 410 635 365 650 340 635 245 405 255 368 252 342 222 332Z M330 415 343 383 370 377 350 422Z M303 490 335 468 370 418 425 403 447 428 427 510 440 550 437 573 348 597 335 580 355 578 353 563 330 562Z M487 432 503 423 509 467 488 465Z M490 582 531 567 532 592 490 596Z M583 743 636 795 572 780Z M430 797 492 770 548 766 523 797 430 810Z M1269 590 1275 588 1284 610Z M1285 760 1295 750V778L1285 775Z',
    streams: 'M203 317H222',
    roads:
      'M942 130 950 150 937 215 945 250 968 297 965 320 942 343 M1410 340 1500 348 M1435 345V467 M1493 350V475 M1350 620 1380 622 1410 585 1445 545 1450 505 M1485 505 1480 545 1410 655 1395 760 M1405 515 1420 520 1427 505 M1410 585 1500 660 M1380 622 1362 680V755 M1500 585 1440 680 1435 755 M1500 640 1470 690V770L1485 810 M1470 723H1500 M1435 770V850 M1395 770 1390 850 1425 870 M1350 870 1355 815 1370 805 1390 805 M1500 810 1470 815 1440 870 M1480 870 1500 850',
    mid: 'M1455 115 1500 125 M1430 230 1500 245 M1330 766 1500 762',
    main: 'M1463 6 1440 200 1400 320 1365 450 1345 525 1325 700 1260 890',
    highway: 'M0 122 180 185 380 260 520 315 610 355 1000 400 1120 440 1500 493',
    ramp: 'M1500 8 1485 15 1470 50',
  },
  {
    ox: 4410,
    oy: 852,
    parks:
      'M0 0H1290L1200 130 1090 275 990 330 900 365 800 390 760 410 757 280 640 272 410 265H225L215 520 212 773 0 765Z M757 278H795V395L760 410Z M920 580 1015 522 1065 600 1083 665 1103 690 1097 765H1065L1060 690 1030 640 920 590Z M1010 660 1022 640 1055 690 1060 720 1030 700Z M598 625V603L625 583 605 545 625 557 659 562V622Z M1217 278 1262 218 1272 220V278Z M1440 482 1480 483 1493 495 1455 535 1440 527Z M1393 0H1450L1435 13Z M940 775 980 785V845L920 835Z M1050 820 1080 820 1085 870H1035Z',
    water:
      'M0 22 35 28 40 78 90 105 105 85 95 28 125 20 145 25 175 0 155 40 160 110 193 117 188 80 205 90 270 73 278 0H390V13H360L350 32 365 65 325 95 297 90 290 147 218 170 90 170 75 115 50 92 65 125 58 138 42 130 35 95 8 50 30 55 22 35 0 28Z M447 0H522L510 45 472 57Z M575 0H680L650 5 600 10Z M790 0H960L918 40 915 105 925 145 905 155 905 198 887 240 862 205 887 210 893 155 865 135 855 32 800 15Z M145 208 198 215 178 263 142 255Z M512 283 570 282 543 312 555 335 545 370 575 432 570 472 490 550 455 567 440 545 460 525 472 460 513 425Z M315 403 385 412 415 430 362 462 350 420 318 413Z M357 532 425 545 397 570 360 555Z M452 580 490 590 497 658 457 610Z M363 680 378 668 417 695 390 702Z M35 525 60 525 73 560 52 555Z M868 313 883 330 877 350 868 340Z',
    streams:
      'M90 170 78 187 125 190 160 210 M160 260 205 320 222 410 230 445 217 517 157 520 M878 240 867 300 880 340 875 360 890 430 878 490 880 560 920 590 1030 640 1055 690 1065 760',
    roads:
      'M277 205 255 250 258 450 248 515 260 530 M285 497 283 315 290 305 422 300 M422 272V415L402 470 352 495 258 500 268 870 M422 272 650 268 793 268V385L690 383 682 350 643 348V270 M682 268V350 M793 305H718V340L790 345 M690 383 660 415 652 485 645 500 555 600 M653 460 855 468 845 545 853 570 M402 470 430 510 437 870 M437 570 517 578 555 600 575 632 578 680 M265 643H437 M645 495 665 505 765 500V465 M645 470 612 465 588 480V502L620 525 650 543 770 540 845 542 M677 545 680 597 748 598 763 542 M853 570 803 585 798 620 797 670 858 665 890 610 853 570 M890 610 950 640 980 665 990 700 M878 640 960 690 M722 653 765 650 M575 580 600 605 M585 575 605 595 M1008 345 1150 590 1185 630 1230 650 1272 652 M1018 340 1170 600 1195 622 1250 643 1272 643 M1180 622 1035 710 M1190 630 1040 720 M1030 370 1130 315 1270 312 M1062 350 1118 442 1138 415 1090 335 M1020 520 1155 465 1175 430 1138 320 1145 285 1225 168 1250 165 1272 205 1245 205 1200 262 1185 265 1165 255 M1145 215 1170 235 M1175 428 1272 430 M1175 315 1208 385V445L1188 490 1212 537 1272 532 M1145 570 1212 537 M1250 312V428 M1285 335V395 M1347 335V395 M1408 335V395 M1467 220V425 M1440 257H1500 M1440 428H1500 M1440 465 1480 463 1500 475 M1440 620 1500 615 M1450 535 1455 610 M1480 520 1500 540 M1455 580 1500 578 M1440 660 1500 670 M1440 690 1500 705 M1400 755 1500 720 M1350 740 1370 790 M1380 740 1400 785 M1272 720 1285 785 M1100 690 1105 720 1095 770 M1270 130 1275 100 1350 20 M1315 105 1350 115 1375 100 1370 50 1355 0 M1315 105 1350 50 1390 42 1425 55 M1300 130 1315 105 M1408 150 1410 120 1455 0 M1455 70 1500 100 M1495 0 1450 100 1500 145 M1470 40 1500 50 M840 740V785 M810 742H870 M145 800V870 M830 840 900 870 M1200 840 1285 855 1500 850 M650 830 760 825 M1285 800V870 M1330 790 1345 870 M1160 800 1170 870',
    mid: 'M1235 122 1320 142 1500 180',
    main: 'M1290 0 1200 130 1090 275 1000 330 900 368 820 388 793 420 785 520 775 620 778 870',
    ramp: 'M0 790H85V870',
  },
];

type Straight = { t: string; x: number; y: number; r: number; len: number };

/* Centre points in map units (three units per pixel). */
const labels: Straight[] = [
  { t: 'Barrington Rd', x: 267, y: 128, r: 90, len: 296 },
  { t: 'Barrington Rd', x: 265, y: 558, r: 90, len: 290 },
  { t: 'N Springinsguth Rd', x: 1157, y: 328, r: 90, len: 410 },
  { t: 'Schaumburg Rd', x: 502, y: 628, r: -3.5, len: 342 },
  { t: 'S Barrington Rd', x: 262, y: 1114, r: 90, len: 335 },
  { t: 'Springinsguth Rd', x: 1154, y: 1105, r: 90, len: 366 },
  { t: 'W Wise Rd', x: 1427, y: 1611, r: -2.5, len: 226 },
  { t: 'N Salem Dr', x: 1786, y: 212, r: 88, len: 238 },
  { t: 'Schaumburg Rd', x: 2762, y: 508, r: -3.5, len: 342 },
  { t: 'Roselle Rd', x: 2523, y: 821, r: 90, len: 222 },
  { t: 'Roselle Rd', x: 2521, y: 1339, r: 90, len: 222 },
  { t: 'S Salem Dr', x: 1842, y: 1082, r: 90, len: 234 },
  { t: 'W Wise Rd', x: 2346, y: 1564, r: -3, len: 226 },
  { t: 'E Wise Rd', x: 2687, y: 1545, r: -3, len: 212 },
  { t: 'Plum Grove Rd', x: 3212, y: 310, r: 90, len: 318 },
  { t: 'Meacham Rd', x: 3718, y: 1132, r: 90, len: 282 },
  { t: 'S Plum Grove Rd', x: 3202, y: 1574, r: 90, len: 364 },
  { t: 'Wise Rd', x: 3370, y: 1514, r: -3, len: 172 },
  { t: 'Landmeier Rd', x: 5870, y: 1045, r: 14, len: 300 },
];

const curved = [
  { id: 'c1', t: 'N Braintree Dr', d: 'M1406 272C1407 400 1472 420 1479 558', len: 302 },
  { id: 'c2', t: 'Weathersfield Way', d: 'M320 848C400 905 440 950 560 946L690 940', len: 396 },
  { id: 'c3', t: 'S Braintree Dr', d: 'M1440 1242C1450 1150 1455 1030 1480 946', len: 296 },
  { id: 'c4', t: 'Weathersfield Way', d: 'M2062 1036C2110 1056 2190 1050 2270 1048L2474 1040', len: 402 },
  { id: 'c5', t: 'Summit Dr', d: 'M2862 906C2872 950 2885 1000 2891 1042S2884 1100 2874 1136', len: 224 },
  { id: 'c6', t: 'Schaumburg Rd', d: 'M3828 460C3870 462 3900 480 3950 520S4030 598 4126 620', len: 338 },
  { id: 'c7', t: 'Biesterfield Rd', d: 'M3922 1486C4020 1484 4070 1512 4110 1557S4155 1610 4174 1656', len: 312 },
  { id: 'c8', t: 'S Arlington Heights Rd', d: 'M5614 984L5700 850C5728 760 5736 650 5756 522', len: 478 },
];

function MapCanvas() {
  return (
    <svg className="block h-full w-full" viewBox="6 6 5904 1716" preserveAspectRatio="none">
      <rect x="0" y="0" width="5910" height="1730" fill={NAVY} />
      {tiles.map((t, i) => (
        <path key={i} d={t.parks} transform={`translate(${t.ox} ${t.oy})`} fill={PARK} fillRule="evenodd" />
      ))}
      {tiles.map((t, i) => (
        <g key={i} transform={`translate(${t.ox} ${t.oy})`}>
          <path d={t.water} fill={WATER} fillRule="evenodd" />
          {t.streams && <path d={t.streams} fill="none" stroke={WATER} strokeWidth="5" />}
        </g>
      ))}
      {tiles.map((t, i) => (
        <g key={i} transform={`translate(${t.ox} ${t.oy})`} fill="none" stroke={ROAD} strokeLinejoin="round">
          <path d={t.roads} strokeWidth="5.5" />
          <path d={t.mid} strokeWidth="12" />
          <path d={t.main} strokeWidth="18" />
        </g>
      ))}
      {tiles.map((t, i) => (
        <g key={i} transform={`translate(${t.ox} ${t.oy})`} fill="none" strokeLinejoin="round">
          {t.ramp && <path d={t.ramp} stroke={HALO} strokeWidth="13" />}
          {t.highway && <path d={t.highway} stroke="#20293a" strokeWidth="29" />}
          {t.ramp && <path d={t.ramp} stroke={TAN} strokeWidth="8" />}
          {t.highway && <path d={t.highway} stroke={TAN} strokeWidth="20" />}
        </g>
      ))}

      <g
        fontFamily="Roboto, sans-serif"
        fontWeight="500"
        fontSize="48"
        fill="#9ca5b3"
        stroke={HALO}
        strokeWidth="17"
        strokeLinejoin="round"
        paintOrder="stroke"
        textAnchor="middle"
      >
        {labels.map((l, i) => (
          <text key={i} transform={`translate(${l.x} ${l.y}) rotate(${l.r})`} y="16" textLength={l.len}>
            {l.t}
          </text>
        ))}
        {curved.map((c) => (
          <React.Fragment key={c.id}>
            <path id={c.id} d={c.d} fill="none" stroke="none" />
            <text dy="16" textLength={c.len}>
              <textPath href={`#${c.id}`} startOffset="50%" textLength={c.len}>
                {c.t}
              </textPath>
            </text>
          </React.Fragment>
        ))}
        <text x="2405" y="268" fontSize="97" fill="#d59563" strokeWidth="20" textLength="588">
          Schaumburg
        </text>
        <g fontStyle="italic" fontSize="71" fill="#3b9282" strokeWidth="20" fontWeight="400">
          <text x="5140" y="38" textLength="302">
            Preserve
          </text>
          <text x="5138" y="114" textLength="514">
            (Busse Woods)
          </text>
        </g>
        <g fontSize="75" fontWeight="400" fill="#d59563" textAnchor="start">
          <text x="4987" y="1587" textLength="448">
            Pirates' Cove
          </text>
          <text x="4987" y="1664" textLength="772">
            Children's Theme Park
          </text>
        </g>
      </g>

      {/* state route shields */}
      <g fill="#fff" stroke="#6c6460" strokeWidth="4" fontFamily="Roboto, sans-serif" fontSize="50" textAnchor="middle">
        <rect x="202" y="1506" width="93" height="76" rx="38" />
        <text x="249" y="1563" fill="#333" stroke="none">
          19
        </text>
        <rect x="4568" y="166" width="92" height="77" rx="38" />
        <text x="4614" y="222" fill="#333" stroke="none">
          72
        </text>
      </g>

      {/* interstate shield */}
      <g transform="translate(2940 0)">
        <path d="M1221 583H1359V600Q1358 640 1289 658Q1222 640 1221 600Z" fill="#4576c4" />
        <path d="M1226 562Q1245 572 1262 568Q1278 568 1290 561Q1302 568 1318 568Q1336 572 1354 562L1359 578H1221Z" fill="#d0605e" />
        <path d="M1221 578H1359V585H1221Z" fill="#fff" />
        <text x="1288" y="633" textAnchor="middle" fontFamily="Roboto, sans-serif" fontWeight="700" fontSize="53" fill="#fff">
          290
        </text>
      </g>

      {/* theme park pin */}
      <g transform="translate(4410 852)">
        <path
          d="M506 677A49 49 0 0 1 555 726C555 762 516 772 510 802H502C496 772 457 762 457 726A49 49 0 0 1 506 677Z"
          fill="#4fb3c8"
          stroke="#d9d3dc"
          strokeWidth="4"
        />
        <path d="M495 752H519L514 744 512 720H502L500 744Z" fill="#fff" />
        <g fill="none" stroke="#fff" strokeWidth="5">
          <path d="M495 744Q482 740 485 730M519 744Q530 740 526 734" />
          <circle cx="488" cy="727" r="6" />
          <circle cx="496" cy="711" r="6" />
          <circle cx="512" cy="706" r="6" />
          <circle cx="526" cy="717" r="6" />
          <circle cx="523" cy="736" r="6" />
        </g>
      </g>

      <Mug x={2628} y={708} />
      <Mug x={2633} y={822} />

      <text
        x="46"
        y="1679"
        fontFamily="Lato, sans-serif"
        fontWeight="600"
        fontSize="122"
        fill="#fff"
        textLength="374"
        lengthAdjust="spacingAndGlyphs"
      >
        Google
      </text>
    </svg>
  );
}

function Mug({ x, y }: { x: number; y: number }) {
  return (
    <g transform={`translate(${x} ${y})`}>
      <path d="M136 50H166Q174 50 174 60V148Q174 158 162 158H136V138H148Q154 138 154 130V78Q154 70 146 70H136Z" fill="#c4782a" />
      <path d="M6 40H144V180H6Z" fill="#f2983a" />
      <path d="M20 60H126V165Q126 172 118 172H28Q20 172 20 165Z" fill="#f8cb52" />
      <path d="M42 66H51V150H42Z M70 78H79V150H70Z M98 66H107V150H98Z" fill="#f2983a" />
      <path d="M0 0H146V56Q138 62 124 62Q116 82 96 82Q78 82 70 68Q62 58 52 66Q44 76 28 72Q16 66 0 54Z" fill="#fff" />
    </g>
  );
}

function MapControls() {
  return (
    <div className="absolute right-5 bottom-12 flex w-14 flex-col gap-5">
      <div className="flex h-14 items-center justify-center rounded-[4px] bg-white">
        <svg viewBox="0 0 66 114" className="mb-1 h-[38px] w-[22px]">
          <path
            d="M12 38Q6 42 5 50L1 82H10V82L16 60V112H50V60L56 82H65L60 50Q58 40 50 38Z"
            fill="#f4b840"
            stroke="#6b5d42"
            strokeWidth="3"
          />
          <path d="M33 80V112" stroke="#6b5d42" strokeWidth="3" />
          <path d="M22 40H46L34 58Z" fill="#d9822b" />
          <circle cx="33" cy="20" r="19" fill="#f4b840" stroke="#8a744a" strokeWidth="3" />
        </svg>
      </div>
      <div className="flex h-[110px] flex-col items-center rounded-[4px] bg-white">
        <div className="flex h-[54px] w-full items-center justify-center">
          <svg viewBox="0 0 22 22" className="ml-0.5 size-[22px]">
            <path d="M8 0h6v8h8v6h-8v8H8v-8H0V8h8z" fill="#666" />
          </svg>
        </div>
        <div className="h-0.5 w-[38px] bg-[#e6e6e6]" />
        <div className="flex h-[54px] w-full items-center justify-center">
          <div className="ml-0.5 h-1.5 w-[22px] bg-[#666]" />
        </div>
      </div>
    </div>
  );
}

function Attribution() {
  return (
    <div className="absolute right-0 bottom-0 flex h-7 gap-0.5 font-[Roboto,sans-serif] text-[20px] leading-[26px] tracking-[7.95px] whitespace-nowrap text-[#444]">
      <div className="w-[408px] bg-[#f5f5f5]/70 pl-2.5">Map data ©2018 Google</div>
      <div className="w-[236px] bg-[#f5f5f5]/70 pl-2.5">Terms of Use</div>
      <div className="w-[332px] bg-[#f5f5f5]/70 pl-2.5">Report a map error</div>
    </div>
  );
}

function EventCard({ title }: { title: string }) {
  return (
    <article className="h-[180px] border-b-2 border-[#e2e2e4] pt-[27px]">
      <h2 className="text-[26px] leading-[30px] font-bold tracking-[7.75px] text-[#f9b341] uppercase [-webkit-text-stroke:0.6px]">
        {title}
      </h2>
      <p className="mt-[22px] pl-[57px] text-[30px] leading-[34px] tracking-[3.65px] text-[#3f97e2]">
        no description available: link to event
      </p>
      <p className="mt-[18px] text-[24px] leading-[28px] font-bold tracking-[7.2px] text-[#73fdff] [-webkit-text-stroke:0.6px]">
        Directions
      </p>
    </article>
  );
}

const events = ['Meineke Recreation Center (MRC)', 'Meineke Recreation Center (MRC)', 'Schaumburg Park District'];

export default function App() {
  return (
    <div className="h-[1424px] w-[2426px] overflow-hidden bg-linear-to-b from-[#00020a] to-[#03142c] font-['Liberation_Sans',Arial,sans-serif]">
      <div className="ml-[262px] w-[1968px]">
        <header className="grid h-[178px] grid-cols-[1fr_auto_1fr] items-start">
          <div />
          <button className="mt-[34px] flex h-[72px] w-[452px] items-center rounded-[4px] border-2 border-[#f9b341] bg-[#02142c] pt-[3px] pl-[30px] font-[Inter,sans-serif] text-[28px] font-bold tracking-[8.2px] whitespace-nowrap text-[#f9b341] uppercase [-webkit-text-stroke:0.4px]">
            Get Happy(Hour)
          </button>
          <div className="mt-[70px] flex w-[200px] flex-col items-center justify-self-end text-center">
            <div className="flex h-10 w-[116px] items-center justify-center rounded-[4px] bg-white pt-0.5 font-[Roboto,sans-serif] text-[30px] font-bold tracking-[-1.2px] text-[#2f6fca]">
              <span className="whitespace-nowrap">
                event<span className="text-[#72b543]">ful</span>
              </span>
            </div>
            <p className="mt-1 mr-0.5 text-[22px] leading-[22px] tracking-[7.7px] whitespace-nowrap text-white">
              <span className="text-[#3f97e2]">Events</span> by
              <br />
              Eventful
            </p>
          </div>
        </header>

        <section className="relative h-[572px] overflow-hidden">
          <MapCanvas />
          <MapControls />
          <Attribution />
        </section>

        <p className="pt-[17px] pr-3 text-right text-[18px] leading-[22px] font-bold tracking-[8.05px] text-white uppercase [-webkit-text-stroke:0.5px]">
          Sorted by distance
        </p>

        <main className="mt-[39px]">
          {events.map((title, i) => (
            <EventCard key={i} title={title} />
          ))}
        </main>
      </div>
    </div>
  );
}
